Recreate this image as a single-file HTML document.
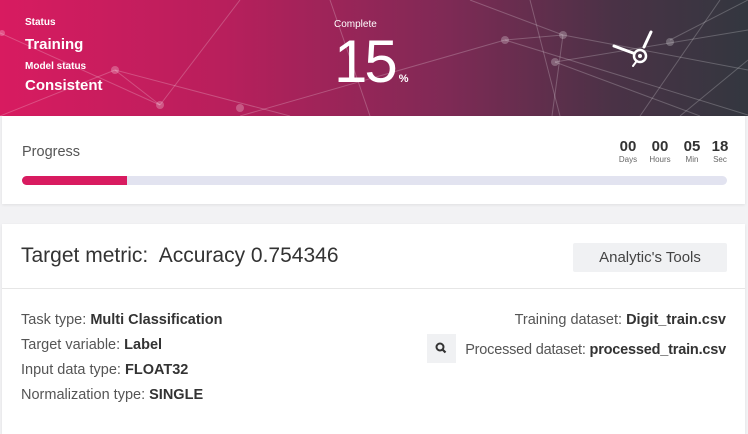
<!DOCTYPE html>
<html><head><meta charset="utf-8"><style>
*{margin:0;padding:0;box-sizing:border-box}
body{width:748px;height:430px;overflow:hidden;background:#f2f2f4;font-family:"Liberation Sans",sans-serif;position:relative}
.hdr{position:absolute;left:0;top:0;width:748px;height:116px;background:linear-gradient(90deg,#d81b60 0%,#b81f5c 30%,#7e2a55 60%,#4a3246 82%,#33373f 100%);overflow:hidden;color:#fff}
.hdr svg{position:absolute;left:0;top:0}
.t{position:absolute;white-space:nowrap}
.card{position:absolute;left:2px;width:743px;background:#fff;box-shadow:0 1px 3px rgba(0,0,0,.08)}
.lbl{color:#555;font-size:14.5px}
.lbl b{color:#333}
</style></head><body>
<div class="hdr">
<svg width="748" height="116">
<g stroke="rgba(255,255,255,0.22)" stroke-width="1" fill="none">
<line x1="0" y1="33" x2="160" y2="105"/><line x1="160" y1="105" x2="240" y2="0"/>
<line x1="115" y1="70" x2="0" y2="116"/><line x1="115" y1="70" x2="290" y2="116"/>
<line x1="330" y1="0" x2="370" y2="116"/><line x1="160" y1="105" x2="115" y2="70"/>
<line x1="240" y1="116" x2="505" y2="40"/><line x1="505" y1="40" x2="563" y2="35"/>
<line x1="563" y1="35" x2="748" y2="70"/><line x1="505" y1="40" x2="748" y2="115"/>
<line x1="563" y1="35" x2="552" y2="116"/><line x1="530" y1="0" x2="560" y2="116"/>
<line x1="555" y1="62" x2="748" y2="30"/><line x1="670" y1="40" x2="748" y2="0"/>
<line x1="640" y1="116" x2="720" y2="0"/><line x1="470" y1="0" x2="563" y2="35"/>
<line x1="680" y1="116" x2="748" y2="60"/><line x1="555" y1="62" x2="700" y2="116"/>
</g>
<g fill="rgba(255,255,255,0.25)">
<circle cx="160" cy="105" r="4"/><circle cx="115" cy="70" r="4"/><circle cx="505" cy="40" r="4"/>
<circle cx="563" cy="35" r="4"/><circle cx="555" cy="62" r="4"/><circle cx="670" cy="42" r="4"/>
<circle cx="240" cy="108" r="4"/><circle cx="2" cy="33" r="3"/>
</g>
<g stroke="#fff" stroke-width="3" fill="none" stroke-linecap="round">
<line x1="614" y1="46" x2="633" y2="53"/><line x1="644" y1="47" x2="651" y2="32"/>
<circle cx="640" cy="56" r="6" stroke-width="2.5"/><line x1="636" y1="62" x2="633" y2="66" stroke-width="2"/>
</g>
<circle cx="640" cy="56" r="2" fill="#fff"/>
</svg>
<div class="t" style="left:25px;top:17px;font-size:10px;font-weight:bold">Status</div>
<div class="t" style="left:25px;top:36px;font-size:15px;font-weight:bold">Training</div>
<div class="t" style="left:25px;top:61px;font-size:10px;font-weight:bold">Model status</div>
<div class="t" style="left:25px;top:77px;font-size:15px;font-weight:bold">Consistent</div>
<div class="t" style="left:334px;top:19px;font-size:10px">Complete</div>
<div class="t" style="left:334px;top:30px;font-size:60px;font-weight:300;line-height:64px;letter-spacing:-3px">15<span style="font-size:11px;font-weight:bold;letter-spacing:0;margin-left:4px">%</span></div>
</div>

<div class="card" style="top:116px;height:88px">
<div class="t" style="left:20px;top:28px;font-size:14.5px;color:#555">Progress</div>
<div style="position:absolute;left:20px;top:60px;width:705px;height:9px;border-radius:5px;background:#e2e3f0"></div>
<div style="position:absolute;left:20px;top:60px;width:105px;height:9px;border-radius:5px 0 0 5px;background:#d81b60"></div>
<div class="t" style="left:615px;top:22px;width:113px;display:flex;justify-content:space-between;color:#333">
<div style="text-align:center;width:22px"><div style="font-size:15px;font-weight:bold;line-height:17px">00</div><div style="font-size:8px;color:#666">Days</div></div>
<div style="text-align:center;width:28px"><div style="font-size:15px;font-weight:bold;line-height:17px">00</div><div style="font-size:8px;color:#666">Hours</div></div>
<div style="text-align:center;width:22px"><div style="font-size:15px;font-weight:bold;line-height:17px">05</div><div style="font-size:8px;color:#666">Min</div></div>
<div style="text-align:center;width:20px"><div style="font-size:15px;font-weight:bold;line-height:17px">18</div><div style="font-size:8px;color:#666">Sec</div></div>
</div>
</div>

<div class="card" style="top:224px;height:210px">
<div class="t" style="left:19px;top:20px;font-size:21px;color:#333">Target metric:&nbsp; Accuracy 0.754346</div>
<div style="position:absolute;left:571px;top:19px;width:154px;height:29px;background:#f0f1f3;border-radius:2px;color:#444;font-size:15px;text-align:center;line-height:29px">Analytic's Tools</div>
<div style="position:absolute;left:0;top:64px;width:743px;height:1px;background:#e6e6e6"></div>
<div class="t lbl" style="left:19px;top:88px">Task type: <b>Multi Classification</b></div>
<div class="t lbl" style="left:19px;top:113px">Target variable: <b>Label</b></div>
<div class="t lbl" style="left:19px;top:138px">Input data type: <b>FLOAT32</b></div>
<div class="t lbl" style="left:19px;top:163px">Normalization type: <b>SINGLE</b></div>
<div class="t lbl" style="right:19px;top:88px">Training dataset: <b>Digit_train.csv</b></div>
<div class="t lbl" style="right:19px;top:118px;letter-spacing:-0.2px">Processed dataset: <b>processed_train.csv</b></div>
<div style="position:absolute;left:425px;top:110px;width:29px;height:29px;background:#f0f1f3">
<svg width="29" height="29"><circle cx="13" cy="13" r="3.5" stroke="#333" stroke-width="2" fill="none"/><line x1="15.5" y1="15.5" x2="18.5" y2="18.5" stroke="#333" stroke-width="2.2"/></svg>
</div>
</div>
</body></html>
